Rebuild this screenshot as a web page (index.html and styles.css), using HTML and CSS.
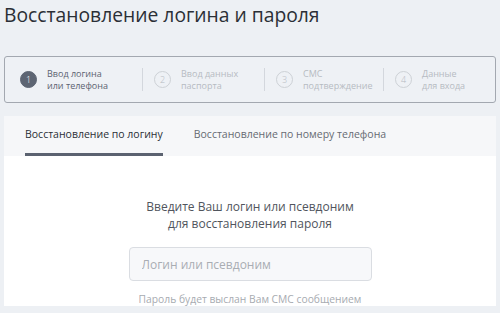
FILE: index.html
```html
<!DOCTYPE html>
<html lang="ru">
<head>
    <meta charset="UTF-8">
    <meta name="viewport" content="width=device-width, initial-scale=1.0">
    <title>Восстановление логина и пароля</title>
    <link rel="stylesheet" href="styles.css">
</head>
<body>
    <h1 class="page-title">Восстановление логина и пароля</h1>

    <div class="steps">
        <div class="step active">
            <span class="step-num">1</span>
            <span class="step-text">Ввод логина<br>или телефона</span>
        </div>
        <div class="step">
            <span class="step-num">2</span>
            <span class="step-text">Ввод данных<br>паспорта</span>
        </div>
        <div class="step">
            <span class="step-num">3</span>
            <span class="step-text">СМС<br>подтверждение</span>
        </div>
        <div class="step">
            <span class="step-num">4</span>
            <span class="step-text">Данные<br>для входа</span>
        </div>
    </div>

    <div class="card">
        <div class="tabs">
            <a href="#" class="tab active">Восстановление по логину</a>
            <a href="#" class="tab">Восстановление по номеру телефона</a>
        </div>
        <div class="card-body">
            <p class="lead">Введите Ваш логин или псевдоним<br>для восстановления пароля</p>
            <input type="text" class="field" placeholder="Логин или псевдоним">
            <p class="hint">Пароль будет выслан Вам СМС сообщением</p>
        </div>
    </div>
</body>
</html>
```

FILE: styles.css
```css
* {
    margin: 0;
    padding: 0;
    box-sizing: border-box;
}

body {
    font-family: 'Open Sans', 'Noto Sans', sans-serif;
    background: #edf0f4;
    padding: 0 4px;
    color: #333;
    overflow: hidden;
}

.page-title {
    font-size: 19.3px;
    font-weight: 400;
    line-height: 28px;
    color: #2b2f36;
    padding-top: 1px;
}

.steps {
    display: grid;
    grid-template-columns: 122px 122px 119px 1fr;
    align-items: center;
    height: 47px;
    margin-top: 27px;
    padding-left: 15px;
    border: 1px solid #a3a8b0;
    border-radius: 3px;
    background: #eef1f5;
}

.step {
    display: flex;
    align-items: center;
    gap: 10px;
    height: 23px;
    padding-left: 11px;
    border-left: 1px solid #d3d7dd;
    color: #b6bbc2;
}

.step.active {
    border-left: none;
    padding-left: 0;
    color: #5b6270;
}

.step-num {
    flex: none;
    width: 17px;
    height: 17px;
    border-radius: 50%;
    border: 1px solid #cdd1d6;
    font-size: 9px;
    font-weight: 300;
    line-height: 15px;
    text-align: center;
}

.step.active .step-num {
    background: #5d6573;
    border-color: #5d6573;
    color: #fff;
}

.step-text {
    font-size: 9px;
    line-height: 12px;
}

.card {
    margin-top: 13px;
    background: #fff;
}

.tabs {
    display: flex;
    gap: 31px;
    padding: 0 21px;
    background: #f6f7f9;
    height: 40px;
}

.tab {
    display: block;
    font-size: 10.5px;
    line-height: 37px;
    color: #666b73;
    text-decoration: none;
    border-bottom: 3px solid transparent;
}

.tab.active {
    color: #2b2f36;
    border-bottom-color: #5b6270;
}

.card-body {
    display: flex;
    flex-direction: column;
    align-items: center;
    padding-top: 42px;
}

.lead {
    font-size: 12px;
    line-height: 17px;
    color: #50555d;
    text-align: center;
}

.field {
    width: 243px;
    height: 34px;
    margin-top: 15px;
    padding: 0 12px;
    border: 1px solid #dadde2;
    border-radius: 4px;
    background: #f7f8fa;
    font-family: inherit;
    font-size: 12px;
    color: #333;
}

.field::placeholder {
    color: #a9adb3;
}

.hint {
    margin-top: 11px;
    font-size: 10.3px;
    color: #a7abb1;
}
```
